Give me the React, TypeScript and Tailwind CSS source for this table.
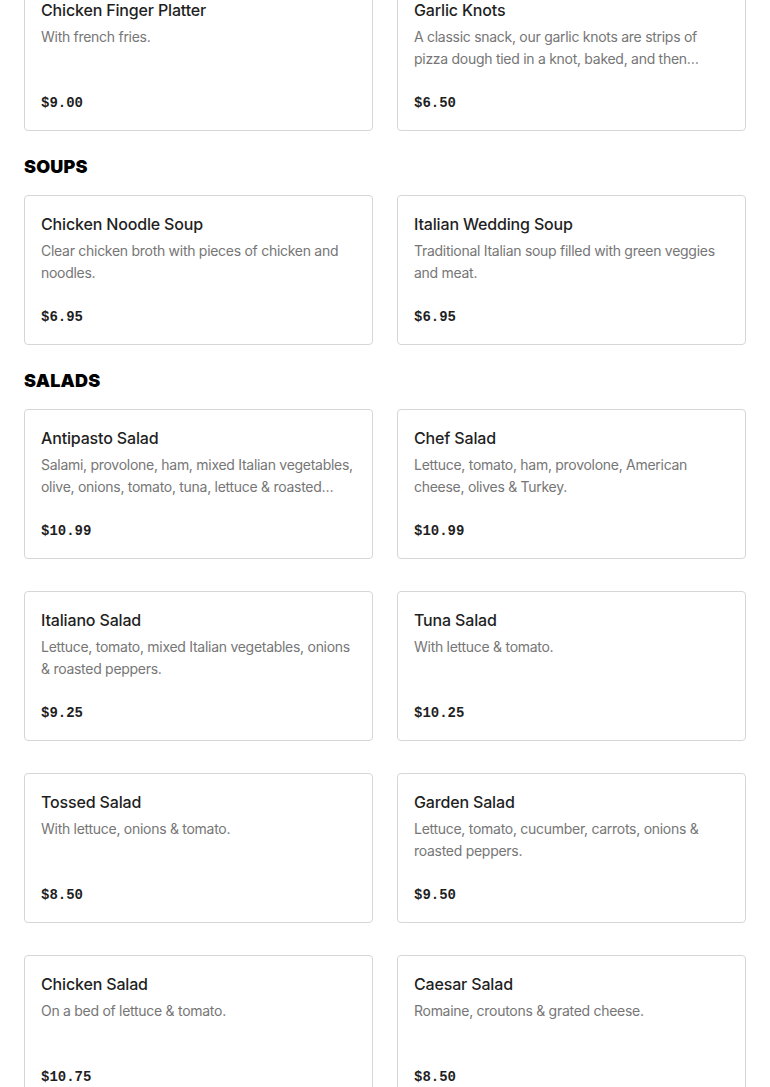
type Item = { name: string; desc: string; price: string }

const sections: { title?: string; items: Item[] }[] = [
  {
    items: [
      { name: 'Chicken Finger Platter', desc: 'With french fries.', price: '$9.00' },
      {
        name: 'Garlic Knots',
        desc: 'A classic snack, our garlic knots are strips of pizza dough tied in a knot, baked, and then topped with garlic and herbs.',
        price: '$6.50',
      },
    ],
  },
  {
    title: 'SOUPS',
    items: [
      { name: 'Chicken Noodle Soup', desc: 'Clear chicken broth with pieces of chicken and noodles.', price: '$6.95' },
      { name: 'Italian Wedding Soup', desc: 'Traditional Italian soup filled with green veggies and meat.', price: '$6.95' },
    ],
  },
  {
    title: 'SALADS',
    items: [
      {
        name: 'Antipasto Salad',
        desc: 'Salami, provolone, ham, mixed Italian vegetables, olive, onions, tomato, tuna, lettuce & roasted peppers.',
        price: '$10.99',
      },
      { name: 'Chef Salad', desc: 'Lettuce, tomato, ham, provolone, American cheese, olives & Turkey.', price: '$10.99' },
      { name: 'Italiano Salad', desc: 'Lettuce, tomato, mixed Italian vegetables, onions & roasted peppers.', price: '$9.25' },
      { name: 'Tuna Salad', desc: 'With lettuce & tomato.', price: '$10.25' },
      { name: 'Tossed Salad', desc: 'With lettuce, onions & tomato.', price: '$8.50' },
      { name: 'Garden Salad', desc: 'Lettuce, tomato, cucumber, carrots, onions & roasted peppers.', price: '$9.50' },
      { name: 'Chicken Salad', desc: 'On a bed of lettuce & tomato.', price: '$10.75' },
      { name: 'Caesar Salad', desc: 'Romaine, croutons & grated cheese.', price: '$8.50' },
    ],
  },
]

function MenuCard({ item }: { item: Item }) {
  return (
    <div className="flex flex-col rounded-[4px] border border-[#d6d6d6] bg-white p-4">
      <div className="text-[16px] font-medium leading-6 tracking-[-0.01em] text-[#1f1f1f]">{item.name}</div>
      <div className="mt-1 line-clamp-2 h-[44px] text-[14px] leading-[22px] tracking-[-0.02em] text-[#767676]">
        {item.desc}
      </div>
      <div
        className="mt-[22px] text-[14px] font-bold leading-[22px] text-[#1f1f1f]"
        style={{ fontFamily: '"Liberation Mono", "DejaVu Sans Mono", monospace' }}
      >
        {item.price}
      </div>
    </div>
  )
}

export default function App() {
  return (
    <div
      className="min-h-screen bg-white px-6 pb-10"
      style={{ fontFamily: 'Inter, "Noto Sans", sans-serif' }}
    >
      <div className="-mt-[19px]">
        {sections.map((section, i) => (
          <div key={i} className={i > 0 ? 'mt-6' : ''}>
            {section.title && (
              <h2 className="mb-4 text-[18px] font-black leading-6 tracking-[0.01em] text-black">
                {section.title}
              </h2>
            )}
            <div className="grid grid-cols-2 gap-x-6 gap-y-8">
              {section.items.map((item) => (
                <MenuCard key={item.name} item={item} />
              ))}
            </div>
          </div>
        ))}
      </div>
    </div>
  )
}
